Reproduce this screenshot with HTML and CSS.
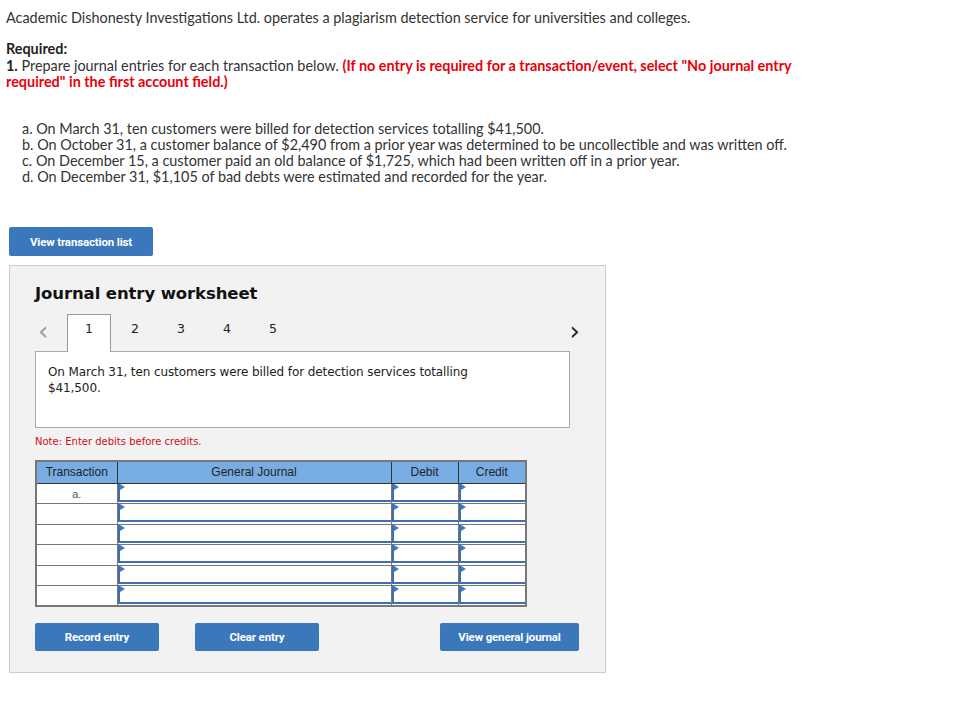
FILE: index.html
```html
<!DOCTYPE html>
<html lang="en">
<head>
	<meta charset="UTF-8">
	<title>Journal entry worksheet</title>
<link rel="stylesheet" href="styles.css">
</head>

<body>
<div class="question">
	<p class="lead">Academic Dishonesty Investigations Ltd. operates a plagiarism detection service for universities and colleges.</p>
	<p class="req_title"><b>Required:</b></p>
	<p class="req"><b>1.</b> Prepare journal entries for each transaction below. <span class="warn">(If no entry is required for a transaction/event, select "No journal entry required" in the first account field.)</span></p>
	<ul class="events">
		<li>a. On March 31, ten customers were billed for detection services totalling $41,500.</li>
		<li>b. On October 31, a customer balance of $2,490 from a prior year was determined to be uncollectible and was written off.</li>
		<li>c. On December 15, a customer paid an old balance of $1,725, which had been written off in a prior year.</li>
		<li>d. On December 31, $1,105 of bad debts were estimated and recorded for the year.</li>
	</ul>
	<a class="btn btn_list" href="javascript:;">View transaction list</a>
</div>

<div class="worksheet">
	<h2>Journal entry worksheet</h2>
	<div class="tabs">
		<a class="arrow" href="javascript:;">&lsaquo;</a>
		<ol>
			<li class="active">1</li>
			<li>2</li>
			<li>3</li>
			<li>4</li>
			<li>5</li>
		</ol>
		<a class="arrow next" href="javascript:;">&rsaquo;</a>
	</div>
	<div class="event_box">
		<p>On March 31, ten customers were billed for detection services totalling $41,500.</p>
	</div>
	<p class="note">Note: Enter debits before credits.</p>

	<table class="journal">
		<thead>
			<tr>
				<th class="c_tr">Transaction</th>
				<th class="c_gj">General Journal</th>
				<th class="c_dr">Debit</th>
				<th class="c_cr">Credit</th>
			</tr>
		</thead>
		<tbody>
			<tr><td class="tr">a.</td><td class="in"><span></span></td><td class="in"><span></span></td><td class="in"><span></span></td></tr>
			<tr><td class="tr"></td><td class="in"><span></span></td><td class="in"><span></span></td><td class="in"><span></span></td></tr>
			<tr><td class="tr"></td><td class="in"><span></span></td><td class="in"><span></span></td><td class="in"><span></span></td></tr>
			<tr><td class="tr"></td><td class="in"><span></span></td><td class="in"><span></span></td><td class="in"><span></span></td></tr>
			<tr><td class="tr"></td><td class="in"><span></span></td><td class="in"><span></span></td><td class="in"><span></span></td></tr>
			<tr><td class="tr"></td><td class="in"><span></span></td><td class="in"><span></span></td><td class="in"><span></span></td></tr>
		</tbody>
	</table>

	<div class="actions">
		<a class="btn btn_rec" href="javascript:;">Record entry</a>
		<a class="btn btn_clr" href="javascript:;">Clear entry</a>
		<a class="btn btn_view" href="javascript:;">View general journal</a>
	</div>
</div>
</body>
</html>
```

FILE: styles.css
```css
* { margin:0; padding:0; list-style:none; box-sizing:border-box;}
body { font-family:"Lato", "Open Sans", sans-serif; font-size:14.4px; line-height:16px; color:#333; background:#fff; padding:10px 0 0 6px;}

.question { width:800px;}
.question p.lead { margin-bottom:14px;}
.question .req_title { line-height:18px;}
.question b { color:#222; font-weight:700;}
.question .warn { color:#e8000b; font-weight:700;}
.events { margin:31px 0 0 16px;}
.btn { display:inline-flex; align-items:center; justify-content:center; height:28px; background:#3b77bb; color:#fff; border-radius:2px; text-decoration:none; font-family:"Roboto", sans-serif; font-weight:700; font-size:11.5px; letter-spacing:-0.15px;}
.btn_list { width:144px; height:29px; margin:42px 0 0 3px;}

.worksheet { width:597px; height:408px; margin:9px 0 0 3px; background:#f2f2f2; border:1px solid #ccc; padding:0 0 0 25px;}
.worksheet h2 { font-family:"DejaVu Sans", sans-serif; font-size:16.5px; font-weight:bold; color:#111; margin-top:19px; line-height:18px; letter-spacing:-0.1px;}

.tabs { display:flex; align-items:flex-end; width:545px; margin-top:11px; height:37px;}
.tabs .arrow { width:32px; height:36px; line-height:32px; font-size:26px; color:#999; text-decoration:none; padding-left:3px; font-family:"DejaVu Sans", sans-serif;}
.tabs .arrow.next { margin-left:auto; width:auto; color:#222; padding-left:0;}
.tabs ol { display:flex; gap:2px;}
.tabs li { width:44px; height:37px; line-height:28px; text-align:center; font-family:"DejaVu Sans", sans-serif; font-size:12.5px; color:#222; border:1px solid transparent; border-bottom:none;}
.tabs li.active { background:#fff; border-color:#999; position:relative; z-index:1; height:38px; margin-bottom:-1px;}

.event_box { width:535px; height:77px; background:#fff; border:1px solid #aaa; padding:12px 12px 0 12px;}
.event_box p { width:470px; font-family:"DejaVu Sans", sans-serif; font-size:12px; line-height:16px; color:#222; letter-spacing:-0.1px;}

.note { font-family:"DejaVu Sans", sans-serif; font-size:10px; color:#d0101a; margin-top:7px; line-height:14px;}

.journal { margin-top:11px; border-collapse:collapse; border:2px solid #777; font-family:"Liberation Sans", Arial, sans-serif; font-size:12px; background:#fff;}
.journal th { height:22px; background:#78ade4; color:#222; font-weight:normal; border:1px solid #333; border-top:none; text-align:center;}
.journal .c_tr { width:81px;}
.journal .c_gj { width:274px;}
.journal .c_dr { width:67px;}
.journal .c_cr { width:68px;}
.journal td { height:20.5px; border:1px solid #777; padding:0;}
.journal td.tr { text-align:center; color:#555; font-size:11px; vertical-align:top; padding-top:2px;}
.journal td.in { padding:0; vertical-align:top;}
.journal td.in span { display:block; height:18px; border-left:2px solid #3d6fb2; border-bottom:2px solid #3d6fb2; position:relative; background:#fff;}
.journal td.in span:before { content:""; position:absolute; left:0; top:0; border-left:5px solid #3d78c9; border-top:3px solid transparent; border-bottom:3px solid transparent;}

.actions { display:flex; width:545px; margin-top:16px;}
.btn_rec { width:124px;}
.btn_clr { width:124px; margin-left:36px;}
.btn_view { width:139px; margin-left:auto; margin-right:1px;}
```
